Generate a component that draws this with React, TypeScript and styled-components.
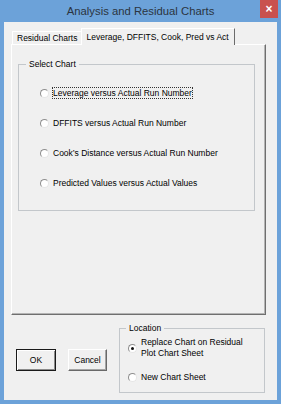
import styled, { createGlobalStyle } from "styled-components";

const GlobalStyle = createGlobalStyle`
  html, body {
    margin: 0;
    padding: 0;
  }
  body {
    background: #6ca2d9;
    font-family: "Liberation Sans", Arial, sans-serif;
  }
`;

const Window = styled.div`
  width: 281px;
  height: 404px;
  background: #6ca2d9;
  display: flex;
  flex-direction: column;
`;

const TitleBar = styled.div`
  height: 22px;
  display: grid;
  grid-template-columns: 1fr auto 1fr;
  align-items: center;
`;

const Title = styled.div`
  grid-column: 2;
  font-size: 11.3px;
  line-height: 22px;
  color: #2b3440;
  white-space: nowrap;
`;

const CloseButton = styled.div`
  grid-column: 3;
  justify-self: end;
  align-self: start;
  width: 18px;
  height: 18px;
  margin-right: 3px;
  background: #c9514e;
  color: #fff;
  font-size: 12px;
  font-weight: bold;
  display: flex;
  align-items: center;
  justify-content: center;
`;

const Client = styled.div`
  flex: 1;
  margin: 0 4px 4px 4px;
  background: #f0f0f0;
  padding-top: 6px;
  display: flex;
  flex-direction: column;
  font-size: 8.5px;
  color: #000;
`;

const TabControl = styled.div`
  width: 255px;
  margin-left: 7px;
`;

const TabStrip = styled.div`
  height: 16px;
  display: flex;
  align-items: flex-end;
  padding-left: 1px;
`;

const Tab = styled.div<{ $active?: boolean }>`
  box-sizing: border-box;
  display: flex;
  align-items: center;
  white-space: nowrap;
  background: #f0f0f0;
  border-top: 1px solid #ffffff;
  border-left: 1px solid #ffffff;
  height: ${(p) => (p.$active ? "17px" : "13px")};
  padding: ${(p) => (p.$active ? "0 5px 0 4px" : "0 4px 0 4px")};
  border-right: ${(p) => (p.$active ? "1px solid #6b6b6b" : "none")};
  margin-bottom: ${(p) => (p.$active ? "-1px" : "0")};
  position: relative;
  z-index: ${(p) => (p.$active ? 1 : 0)};
`;

const Panel = styled.div`
  box-sizing: border-box;
  height: 271px;
  border-top: 1px solid #ffffff;
  border-left: 1px solid #ffffff;
  border-right: 1px solid #6f6f6f;
  border-bottom: 1px solid #6f6f6f;
  box-shadow: inset -1px -1px 0 #b4b4b4;
  display: flex;
  flex-direction: column;
`;

const GroupBox = styled.fieldset`
  box-sizing: border-box;
  margin: 0;
  padding: 0;
  min-width: 0;
  border: 1px solid #c3c7cb;
`;

const Legend = styled.legend<{ $indent: number }>`
  font-size: 8.5px;
  line-height: 10px;
  padding: 0 3px;
  margin-left: ${(p) => p.$indent}px;
`;

const ChartGroup = styled(GroupBox)`
  width: 237px;
  height: 152px;
  margin: 14px 0 0 6px;
`;

const RadioList = styled.div`
  display: flex;
  flex-direction: column;
  padding: 9px 0 0 21px;
`;

const RadioRow = styled.div`
  height: 30px;
  display: flex;
  align-items: center;
  gap: 4px;
`;

const RadioCircle = styled.span<{ $checked?: boolean }>`
  box-sizing: border-box;
  width: 9px;
  height: 9px;
  flex: none;
  border-radius: 50%;
  background: #ffffff;
  border: 1px solid;
  border-color: #8d8d8d #e6e6e6 #e6e6e6 #8d8d8d;
  display: flex;
  align-items: center;
  justify-content: center;
  &::after {
    content: "";
    width: 3px;
    height: 3px;
    border-radius: 50%;
    background: ${(p) => (p.$checked ? "#111" : "transparent")};
  }
`;

const RadioLabel = styled.span<{ $focused?: boolean }>`
  line-height: 10px;
  white-space: nowrap;
  outline: ${(p) => (p.$focused ? "1px dotted #333" : "none")};
  outline-offset: 0;
`;

const BottomRow = styled.div`
  display: flex;
  align-items: center;
  margin-top: 8px;
  padding-left: 12px;
  gap: 12px;
`;

const Button = styled.div<{ $default?: boolean; $width: number }>`
  box-sizing: border-box;
  width: ${(p) => p.$width}px;
  height: 22px;
  margin-top: 4px;
  display: flex;
  align-items: center;
  justify-content: center;
  background: #f0f0f0;
  border: 1px solid;
  border-color: ${(p) =>
    p.$default ? "#1a1a1a" : "#ffffff #696969 #696969 #ffffff"};
  box-shadow: ${(p) =>
    p.$default
      ? "inset 1px 1px 0 #ffffff, inset -1px -1px 0 #8a8a8a"
      : "inset -1px -1px 0 #a5a5a5"};
`;

const LocationGroup = styled(GroupBox)`
  width: 146px;
  height: 70px;
`;

const LocationList = styled.div`
  display: flex;
  flex-direction: column;
  gap: 13px;
  padding: 4px 0 0 8px;
`;

const LocationRow = styled.div`
  display: flex;
  align-items: center;
  gap: 4px;
  line-height: 11px;
`;

const charts = [
  "Leverage versus Actual Run Number",
  "DFFITS versus Actual Run Number",
  "Cook\u2019s Distance versus Actual Run Number",
  "Predicted Values versus Actual Values",
];

export default function App() {
  return (
    <>
      <GlobalStyle />
      <Window>
        <TitleBar>
          <Title>Analysis and Residual Charts</Title>
          <CloseButton>×</CloseButton>
        </TitleBar>
        <Client>
          <TabControl>
            <TabStrip>
              <Tab>Residual Charts</Tab>
              <Tab $active>Leverage, DFFITS, Cook, Pred vs Act</Tab>
            </TabStrip>
            <Panel>
              <ChartGroup>
                <Legend $indent={7}>Select Chart</Legend>
                <RadioList>
                  {charts.map((c, i) => (
                    <RadioRow key={c}>
                      <RadioCircle />
                      <RadioLabel $focused={i === 0}>{c}</RadioLabel>
                    </RadioRow>
                  ))}
                </RadioList>
              </ChartGroup>
            </Panel>
          </TabControl>
          <BottomRow>
            <Button $default $width={40}>OK</Button>
            <Button $width={39}>Cancel</Button>
            <LocationGroup>
              <Legend $indent={6}>Location</Legend>
              <LocationList>
                <LocationRow>
                  <RadioCircle $checked />
                  <span>
                    Replace Chart on Residual
                    <br />
                    Plot Chart Sheet
                  </span>
                </LocationRow>
                <LocationRow>
                  <RadioCircle />
                  <span>New Chart Sheet</span>
                </LocationRow>
              </LocationList>
            </LocationGroup>
          </BottomRow>
        </Client>
      </Window>
    </>
  );
}
